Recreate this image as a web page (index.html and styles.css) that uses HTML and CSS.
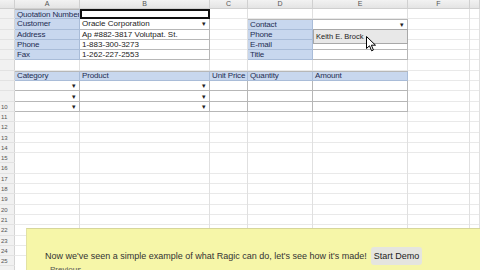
FILE: index.html
```html
<!DOCTYPE html>
<html>
<head>
<meta charset="utf-8">
<link rel="stylesheet" href="styles.css">
</head>
<body>
<div class="sheet">
  <div class="colline c0"></div>
  <div class="colline c1"></div>
  <div class="colline c2"></div>
  <div class="colline c3"></div>
  <div class="colline c4"></div>
  <div class="colline c5"></div>
  <div class="colline c6"></div>
  <div class="colline c7"></div>

  <div class="hdr c0"></div>
  <div class="hdr c1">A</div>
  <div class="hdr c2">B</div>
  <div class="hdr c3">C</div>
  <div class="hdr c4">D</div>
  <div class="hdr c5">E</div>
  <div class="hdr c6">F</div>
  <div class="hdr c7"></div>

  <div class="rownums">
    <span></span><span></span><span></span><span></span><span></span><span></span><span></span><span></span><span></span>
    <span>10</span><span>11</span><span>12</span><span>13</span><span>14</span><span>15</span><span>16</span><span>17</span><span>18</span><span>19</span><span>20</span><span>21</span><span>22</span><span>23</span><span>24</span><span>25</span>
  </div>

  <div class="cell lab top c1 r1">Quotation Number</div>
  <div class="cell sel c2 r1"></div>
  <div class="cell lab c1 r2">Customer</div>
  <div class="cell val c2 r2"><span>Oracle Corporation</span><span class="arr">▾</span></div>
  <div class="cell lab c1 r3">Address</div>
  <div class="cell val c2 r3">Ap #882-3817 Volutpat. St.</div>
  <div class="cell lab c1 r4">Phone</div>
  <div class="cell val c2 r4">1-883-300-3273</div>
  <div class="cell lab c1 r5">Fax</div>
  <div class="cell val c2 r5">1-262-227-2553</div>

  <div class="cell lab top c4 r2">Contact</div>
  <div class="cell val top c5 r2"><span></span><span class="arr">▾</span></div>
  <div class="cell lab c4 r3">Phone</div>
  <div class="cell val c5 r3"></div>
  <div class="cell lab c4 r4">E-mail</div>
  <div class="cell val c5 r4"></div>
  <div class="cell lab c4 r5">Title</div>
  <div class="cell val c5 r5"></div>

  <div class="cell lab top c1 r7">Category</div>
  <div class="cell lab top c2 r7">Product</div>
  <div class="cell lab top c3 r7">Unit Price</div>
  <div class="cell lab top c4 r7">Quantity</div>
  <div class="cell lab top c5 r7">Amount</div>

  <div class="cell val c1 r8"><span></span><span class="arr">▾</span></div>
  <div class="cell val c2 r8"><span></span><span class="arr">▾</span></div>
  <div class="cell val c3 r8"></div>
  <div class="cell val c4 r8"></div>
  <div class="cell val c5 r8"></div>
  <div class="cell val c1 r9"><span></span><span class="arr">▾</span></div>
  <div class="cell val c2 r9"><span></span><span class="arr">▾</span></div>
  <div class="cell val c3 r9"></div>
  <div class="cell val c4 r9"></div>
  <div class="cell val c5 r9"></div>
  <div class="cell val c1 r10"><span></span><span class="arr">▾</span></div>
  <div class="cell val c2 r10"><span></span><span class="arr">▾</span></div>
  <div class="cell val c3 r10"></div>
  <div class="cell val c4 r10"></div>
  <div class="cell val c5 r10"></div>
</div>

<div class="suggest">Keith E. Brock</div>
<svg class="cursor" width="11" height="16" viewBox="0 0 11 16">
  <path d="M0.5 0.5 L0.5 12.5 L3.5 9.8 L5.6 14.8 L7.4 14 L5.4 9.2 L9.5 9.2 Z" fill="#fff" stroke="#000" stroke-width="1"/>
</svg>

<div class="panel">
  <div class="panel-row">
    <span class="msg">Now we've seen a simple example of what Ragic can do, let's see how it's made!</span>
    <span class="btn">Start Demo</span>
  </div>
  <div class="prev">Previous</div>
</div>
</body>
</html>
```

FILE: styles.css
```css
html, body {
  margin: 0;
  padding: 0;
  width: 480px;
  height: 270px;
  overflow: hidden;
  background: #fff;
  font-family: "Liberation Sans", Arial, sans-serif;
}

.sheet {
  position: relative;
  display: grid;
  grid-template-columns: 15px 65px 130px 38px 65px 95px 62px 10px;
  grid-template-rows: 9px repeat(26, 10.3px);
  width: 480px;
  height: 270px;
  overflow: hidden;
  background-image: repeating-linear-gradient(to bottom, transparent 0, transparent 9.3px, #e9e9e9 9.3px, #e9e9e9 10.3px);
  background-position: 0 9px;
  background-repeat: repeat-x;
}

.c0 { grid-column: 1; }
.c1 { grid-column: 2; }
.c2 { grid-column: 3; }
.c3 { grid-column: 4; }
.c4 { grid-column: 5; }
.c5 { grid-column: 6; }
.c6 { grid-column: 7; }
.c7 { grid-column: 8; }

.r1 { grid-row: 2; }
.r2 { grid-row: 3; }
.r3 { grid-row: 4; }
.r4 { grid-row: 5; }
.r5 { grid-row: 6; }
.r7 { grid-row: 8; }
.r8 { grid-row: 9; }
.r9 { grid-row: 10; }
.r10 { grid-row: 11; }

.colline {
  grid-row: 1 / -1;
  border-right: 1px solid #e0e0e0;
}
.colline.c0 {
  background: #f1f1f1;
  border-right: 1px solid #d4d4d4;
}

.hdr {
  grid-row: 1;
  background: linear-gradient(#f2f2f2, #e4e4e4);
  border-right: 1px solid #d0d0d0;
  border-bottom: 1px solid #cfcfcf;
  font-size: 7px;
  line-height: 8px;
  color: #555;
  text-align: center;
}

.rownums {
  grid-column: 1;
  grid-row: 2 / -1;
  display: flex;
  flex-direction: column;
}
.rownums span {
  height: 10.3px;
  flex: none;
  font-size: 6px;
  line-height: 10px;
  color: #555;
  padding-left: 1px;
  border-bottom: 1px solid #e2e2e2;
  box-sizing: border-box;
}

.cell {
  box-sizing: border-box;
  font-size: 8px;
  line-height: 9px;
  padding: 0 2px;
  white-space: nowrap;
  overflow: hidden;
  border-right: 1px solid #b7b7b7;
  border-bottom: 1px solid #b7b7b7;
  display: flex;
  justify-content: space-between;
  align-items: center;
}
.cell.top { border-top: 1px solid #b7b7b7; }

.lab {
  background: #c8d7ee;
  color: #1e2d52;
  border-color: #a9bcd8;
  letter-spacing: -0.15px;
}
.val {
  background: #fff;
  color: #222;
}
.sel {
  background: #fff;
  border: 2px solid #111;
}
.arr {
  font-size: 7px;
  color: #222;
  padding-right: 1px;
}

.suggest {
  position: absolute;
  left: 313px;
  top: 29px;
  width: 95px;
  height: 15px;
  box-sizing: border-box;
  background: #e8e8e8;
  border: 1px solid #a8a8a8;
  font-size: 7.5px;
  line-height: 13px;
  padding-left: 2px;
  color: #222;
}

.cursor {
  position: absolute;
  left: 366px;
  top: 36px;
}

.panel {
  position: absolute;
  left: 26px;
  top: 228px;
  right: 0;
  bottom: 0;
  background: #f6f6a8;
  border-top: 1px solid #d6d69a;
  border-left: 1px solid #e2e2a4;
  padding: 18px 0 0 18px;
  box-sizing: border-box;
}
.panel-row {
  display: flex;
  align-items: center;
  gap: 4px;
}
.msg {
  font-size: 9px;
  color: #333;
}
.btn {
  height: 18px;
  line-height: 18px;
  padding: 0 3px;
  background: #e5e5df;
  border-radius: 3px;
  font-size: 9px;
  color: #222;
}
.prev {
  font-size: 8px;
  color: #555;
  padding-left: 5px;
  line-height: 9px;
}
```
